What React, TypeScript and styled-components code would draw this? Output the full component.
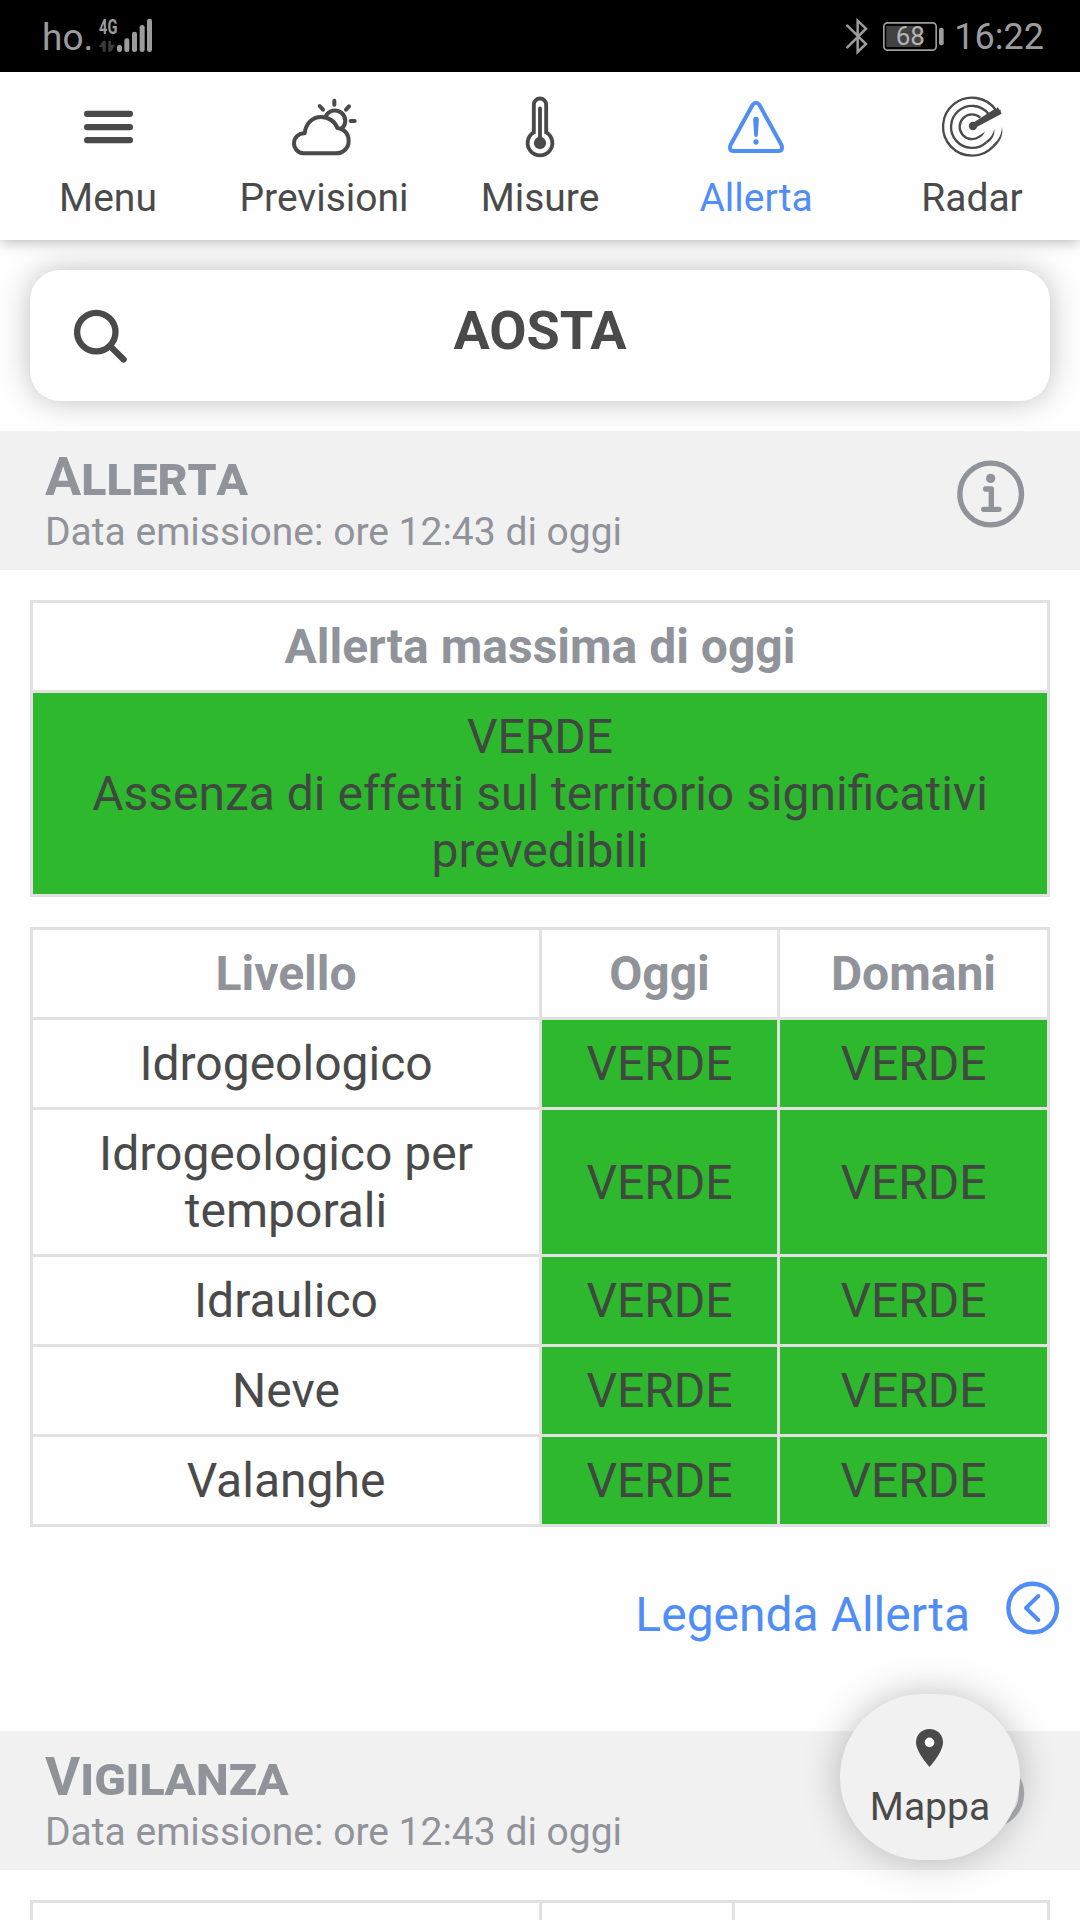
import React from "react";
import styled, { createGlobalStyle } from "styled-components";

const color = {
  text: "#4a4a4a",
  muted: "#909399",
  accent: "#508df7",
  band: "#f1f1f1",
  line: "#e1e1e1",
  green: "#2eb82e",
  status: "#9c9c9c",
};

const GlobalStyle = createGlobalStyle`
  * { box-sizing: border-box; }
  html, body { margin: 0; background: #fefefe; }
  body { font-family: Roboto, "Noto Sans", sans-serif; color: ${color.text}; }
  svg { display: block; flex: none; }
`;

const Screen = styled.div`
  position: relative;
  display: flex;
  flex-direction: column;
  width: 1080px;
  height: 1920px;
  overflow: hidden;
  background: #fefefe;
`;

const StatusBar = styled.header`
  flex: none;
  display: flex;
  align-items: flex-start;
  height: 72px;
  padding: 16px 36px 0 42px;
  background: #000;
  color: ${color.status};
`;

const StatusText = styled.span`
  font-size: 36px;
  line-height: 43px;
  white-space: nowrap;
`;

const Carrier = styled(StatusText)`
  width: 55px;
  font-size: 37px;
`;

const StatusRight = styled.div`
  display: flex;
  margin-left: auto;
`;

const Battery = styled.div`
  display: grid;
  width: 62px;
  height: 29px;
  margin: 6px 9px 0 15px;

  > * { grid-area: 1 / 1; }
`;

const BatteryLevel = styled.span`
  width: 54px;
  font-size: 26px;
  line-height: 29px;
  text-align: center;
  color: #b4b4b4;
`;

const Nav = styled.nav`
  flex: none;
  z-index: 2;
  display: grid;
  grid-template-columns: repeat(5, 216px);
  height: 168px;
  background: #fefefe;
  box-shadow: 0 0 15px rgba(0, 0, 0, 0.35);
`;

const NavItem = styled.a<{ $active?: boolean }>`
  display: flex;
  flex-direction: column;
  align-items: center;
  padding-top: 22px;
  color: ${(p) => (p.$active ? color.accent : color.text)};
`;

const NavLabel = styled.span`
  margin-top: 15px;
  font-size: 39px;
  line-height: 46px;
`;

const SearchCard = styled.div`
  flex: none;
  display: grid;
  grid-template-columns: 160px 1fr 160px;
  height: 131px;
  margin: 30px 30px 0;
  padding-top: 29px;
  border-radius: 30px;
  background: #fff;
  box-shadow: 0 0 30px rgba(0, 0, 0, 0.25);
`;

const SearchButton = styled.span`
  padding: 10px 0 0 44px;
`;

const Place = styled.h1`
  margin: 0;
  font-size: 54px;
  line-height: 64px;
  font-weight: 700;
  text-align: center;
`;

const Band = styled.section`
  flex: none;
  z-index: 1;
  display: flex;
  justify-content: space-between;
  height: 139px;
  margin-top: 30px;
  padding: 14px 55px 0 45px;
  background: ${color.band};
  color: ${color.muted};
`;

const BandTitle = styled.h2`
  margin: 0;
  font-size: 54px;
  line-height: 64px;
  font-weight: 700;
  font-variant-caps: small-caps;
`;

const BandDate = styled.p`
  margin: 0;
  font-size: 39px;
  line-height: 46px;
`;

const InfoButton = styled.span<{ $faded?: boolean }>`
  padding-top: 14.500px;
  opacity: ${(p) => (p.$faded ? 0.65 : 1)};
`;

const Table = styled.div<{ $columns: string }>`
  flex: none;
  display: grid;
  grid-template-columns: ${(p) => p.$columns};
  gap: 3px;
  margin: 30px 30px 0;
  border: 3px solid ${color.line};
  background: ${color.line};
`;

const Cell = styled.div<{ $head?: boolean; $level?: boolean }>`
  display: flex;
  flex-direction: column;
  justify-content: center;
  padding: 15px;
  font-size: 48px;
  line-height: 57px;
  text-align: center;
  font-weight: ${(p) => (p.$head ? 700 : 400)};
  color: ${(p) => (p.$head ? color.muted : p.$level ? "#404940" : color.text)};
  background: ${(p) => (p.$level ? color.green : "#fefefe")};
`;

const LegendLink = styled.a`
  flex: none;
  display: flex;
  justify-content: flex-end;
  height: 174px;
  padding: 54px 20px 0 0;
  color: ${color.accent};
`;

const LegendText = styled.span`
  margin: 5px 36px 0 0;
  font-size: 48px;
  line-height: 57px;
`;

const MapButton = styled.button`
  position: absolute;
  z-index: 3;
  left: 840px;
  top: 1694px;
  display: flex;
  flex-direction: column;
  align-items: center;
  width: 180px;
  height: 166px;
  padding: 35px 0 0;
  border: 0;
  border-radius: 90px;
  background: ${color.band};
  color: ${color.text};
  box-shadow: 0 0 36px rgba(0, 0, 0, 0.25);
  font-family: inherit;
`;

const MapLabel = styled.span`
  margin-top: 17px;
  font-size: 39px;
  line-height: 46px;
`;

const SignalIcon = () => (
  <svg width="56" height="38" viewBox="291 48 168 114" fill={color.status}>
    <text x="297" y="101" fontSize="58" fontWeight="700" textLength="55" lengthAdjust="spacingAndGlyphs">4G</text>
    <path d="M297 141L309 122H317V155H308V141ZM325 122H333V134H345L333 155H325Z" fill="#3b3b3b" />
    <rect x="351" y="135" width="15" height="21" rx="7" />
    <rect x="373" y="115" width="15" height="41" rx="7" />
    <rect x="396" y="95" width="15" height="61" rx="7" />
    <rect x="419" y="75" width="15" height="81" rx="7" />
    <rect x="441" y="56" width="15" height="100" rx="7" />
  </svg>
);

const BluetoothIcon = () => (
  <svg width="22" height="40" viewBox="140 48 66 120" fill="none" stroke={color.status} strokeWidth="7.500">
    <path d="M144 77L200 132L175 156V62L200 86L144 142" strokeLinecap="round" />
  </svg>
);

const BatteryIcon = () => (
  <svg width="62" height="29" viewBox="252 66 186 87">
    <rect x="254.500" y="68.500" width="157" height="82" rx="11" fill="none" stroke={color.status} strokeWidth="5" />
    <rect x="262" y="78" width="104" height="63" rx="3" fill="#424242" />
    <rect x="420" y="83" width="14" height="53" rx="6" fill={color.status} />
  </svg>
);

const MenuIcon = () => (
  <svg width="66" height="66" viewBox="0 0 66 66" fill="currentColor">
    <rect x="9" y="16.800" width="49" height="6.200" rx="3" />
    <rect x="9" y="30" width="49" height="6.200" rx="3" />
    <rect x="9" y="43" width="49" height="6.200" rx="3" />
  </svg>
);

const WeatherIcon = () => (
  <svg width="66" height="66" viewBox="154 72 198 198" fill="none" stroke="currentColor" strokeWidth="12" strokeLinecap="round">
    <path d="M191 250A30 30 0 0 1 195 190C198 162 217 141 244 141C268 141 287 156 293 174C313 175 327 191 327 212C327 234 311 250 289 250Z" strokeLinejoin="round" />
    <path d="M259 137A31 31 0 1 1 306 176" />
    <path d="M284 92V104M240 108L250 119M328 109L319 119M333 153H345" />
  </svg>
);

const ThermometerIcon = () => (
  <svg width="66" height="66" viewBox="802 72 198 198" fill="none" stroke="currentColor" strokeWidth="11.500">
    <path d="M882.500 104A18.500 18.500 0 0 1 919.500 104V187A37 37 0 1 1 882.500 187Z" />
    <path d="M901 115V215" strokeLinecap="round" />
    <circle cx="901" cy="219" r="18.500" fill="currentColor" stroke="none" />
  </svg>
);

const AlertIcon = () => (
  <svg width="66" height="66" viewBox="250.500 72 198 198" fill="none" stroke="currentColor" strokeWidth="12">
    <path d="M339 105Q349.500 92 360 105L426 225Q431 243 418 243H281Q268 243 273 225Z" strokeLinejoin="round" />
    <path d="M341 149A8.500 8.500 0 0 1 358 149L355 196A5.500 5.500 0 0 1 344 196Z" fill="currentColor" stroke="none" />
    <circle cx="349.500" cy="216" r="8" fill="currentColor" stroke="none" />
  </svg>
);

const RadarIcon = () => (
  <svg width="66" height="66" viewBox="898 72 198 198" fill="none" stroke="currentColor" strokeWidth="7">
    <path d="M1069 121A87 87 0 1 0 1062 228" />
    <path d="M1046 131A63 63 0 1 0 1040 217" />
    <path d="M1022 143A37 37 0 1 0 1019 200" />
    <g fill="currentColor" stroke="none">
      <path d="M1059 225C1078 210 1086 192 1087 171C1092 196 1080 216 1064 231Z" />
      <path d="M1038 214C1053 203 1060 192 1064 176C1066 196 1058 208 1042 220Z" />
      <path d="M1017 197C1024 194 1030 190 1036 184C1033 192 1028 199 1020 203Z" />
      <circle cx="1000" cy="168" r="12.500" />
      <path d="M999 159L1064 118L1067 113L1071 116L1074 111L1079 119H1083L1083 125L1086 131L1004 175Z" />
    </g>
  </svg>
);

const SearchIcon = () => (
  <svg width="53" height="54" viewBox="0 -.5 53 54" fill="none" stroke="currentColor" strokeWidth="6.300" strokeLinecap="round">
    <circle cx="22.300" cy="22.600" r="19.200" />
    <path d="M36.500 37L49.600 50" />
  </svg>
);

const InfoIcon = () => (
  <svg width="68" height="68" viewBox="591 659 204 204" fill="none" stroke="currentColor" strokeWidth="16" strokeLinecap="round" strokeLinejoin="round">
    <circle cx="692" cy="761" r="92.500" />
    <circle cx="692" cy="714" r="14" fill="currentColor" stroke="none" />
    <path d="M677 746H694V807M671 807H717" />
  </svg>
);

const BackCircleIcon = () => (
  <svg width="54" height="54" viewBox="0 0 54 54" fill="none" stroke="currentColor" strokeWidth="4.400" strokeLinecap="round" strokeLinejoin="round">
    <circle cx="26.700" cy="27" r="24.300" />
    <path d="M32.300 15L20 27L32.300 39" strokeWidth="4" />
  </svg>
);

const PinIcon = () => (
  <svg width="28" height="38" viewBox=".5 0 28 38">
    <path d="M14 0C6.400 0 .5 5.900 .5 13.300C.5 23.300 14 38 14 38S27.500 23.300 27.500 13.300C27.500 5.900 21.600 0 14 0Z" fill="currentColor" />
    <circle cx="14" cy="13.400" r="4.800" fill="#fefefe" />
  </svg>
);

const navItems = [
  { label: "Menu", Icon: MenuIcon },
  { label: "Previsioni", Icon: WeatherIcon },
  { label: "Misure", Icon: ThermometerIcon },
  { label: "Allerta", Icon: AlertIcon, active: true },
  { label: "Radar", Icon: RadarIcon },
];

const levels = ["Idrogeologico", "Idrogeologico per temporali", "Idraulico", "Neve", "Valanghe"];

function SectionBand({ title, faded }: { title: string; faded?: boolean }) {
  return (
    <Band>
      <div>
        <BandTitle>{title}</BandTitle>
        <BandDate>Data emissione: ore 12:43 di oggi</BandDate>
      </div>
      <InfoButton $faded={faded}>
        <InfoIcon />
      </InfoButton>
    </Band>
  );
}

export default function App() {
  return (
    <>
      <GlobalStyle />
      <Screen>
        <StatusBar>
          <Carrier>ho.</Carrier>
          <SignalIcon />
          <StatusRight>
            <BluetoothIcon />
            <Battery>
              <BatteryIcon />
              <BatteryLevel>68</BatteryLevel>
            </Battery>
            <StatusText>16:22</StatusText>
          </StatusRight>
        </StatusBar>
        <Nav>
          {navItems.map(({ label, Icon, active }) => (
            <NavItem key={label} $active={active}>
              <Icon />
              <NavLabel>{label}</NavLabel>
            </NavItem>
          ))}
        </Nav>
        <SearchCard>
          <SearchButton>
            <SearchIcon />
          </SearchButton>
          <Place>AOSTA</Place>
        </SearchCard>
        <SectionBand title="Allerta" />
        <Table $columns="1fr">
          <Cell $head>Allerta massima di oggi</Cell>
          <Cell $level>
            <span>VERDE</span>
            <span>Assenza di effetti sul territorio significativi prevedibili</span>
          </Cell>
        </Table>
        <Table $columns="506px 235px 267px">
          <Cell $head>Livello</Cell>
          <Cell $head>Oggi</Cell>
          <Cell $head>Domani</Cell>
          {levels.map((name) => (
            <React.Fragment key={name}>
              <Cell>{name}</Cell>
              <Cell $level>VERDE</Cell>
              <Cell $level>VERDE</Cell>
            </React.Fragment>
          ))}
        </Table>
        <LegendLink>
          <LegendText>Legenda Allerta</LegendText>
          <BackCircleIcon />
        </LegendLink>
        <SectionBand title="Vigilanza" faded />
        <Table $columns="506px 190px 312px">
          <Cell />
          <Cell />
          <Cell />
        </Table>
        <MapButton>
          <PinIcon />
          <MapLabel>Mappa</MapLabel>
        </MapButton>
      </Screen>
    </>
  );
}
